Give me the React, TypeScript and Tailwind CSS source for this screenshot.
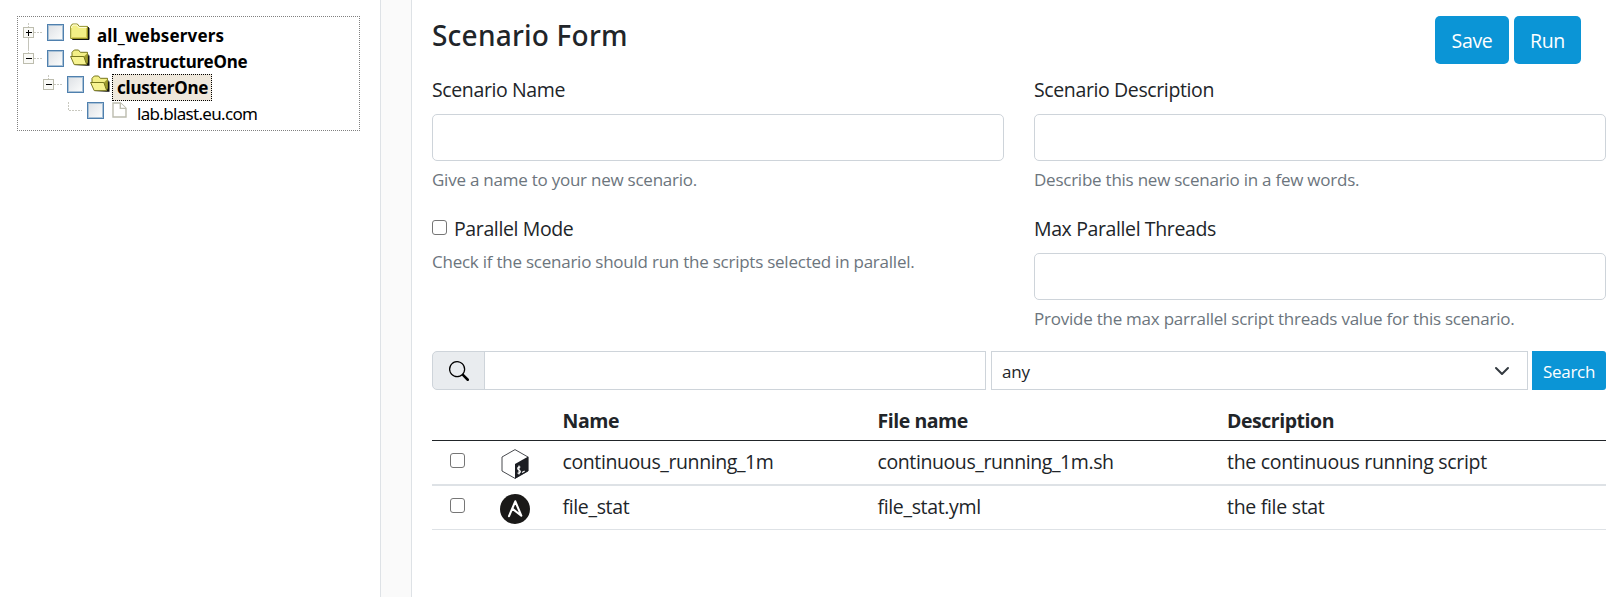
import type { ReactNode } from "react";

const label = "block pt-px text-[19.5px] leading-[30px] tracking-[-0.38px] text-[#212529]";
const help = "mt-[5px] pt-px text-[17px] leading-[26px] tracking-[-0.24px] text-[#6c757d] whitespace-nowrap";
const field = "mt-[9px] block h-[47px] w-full rounded-[5px] border border-[#ced4da] bg-white outline-none";
const button =
  "h-12 rounded-[5px] bg-[#0b95d6] pt-px text-[19.5px] leading-[48px] tracking-[-0.3px] text-white text-center";

function Toggle({ open, above, below }: { open: boolean; above?: boolean; below?: boolean }) {
  return (
    <svg width="24" height="26" viewBox="0 0 24 26" shapeRendering="crispEdges" className="shrink-0">
      {above && <path d="M6.5 0v4" stroke="#c9c9c0" strokeDasharray="2 1" />}
      <path d="M12 9.5h8" stroke="#c9c9c0" strokeDasharray="2 1" />
      {below && <path d="M6.5 15v11" stroke="#c4c4ba" />}
      <rect x="1.5" y="4.5" width="10" height="10" fill="#fafaf7" stroke="#bdbdae" />
      <path d="M4 9.5h6" stroke="#000" strokeWidth="1" />
      {!open && <path d="M6.5 7v6" stroke="#000" strokeWidth="1" />}
    </svg>
  );
}

function TreeCheck() {
  return (
    <span className="mt-px flex h-[17px] w-[17px] shrink-0 border border-[#4f80ae] bg-[#a9c1d6] p-px">
      <span className="flex-1 bg-linear-to-br from-[#dfe2e6] to-[#fafbfb]" />
    </span>
  );
}

function Folder() {
  return (
    <svg width="20" height="20" viewBox="0 0 20 20" className="shrink-0">
      <path d="M2.5 16.5H19V5l-1.5-1V16z" fill="#111" stroke="#111" strokeWidth="1" />
      <path d="M.7 15.5V3.2L2.4 1h5l1.8 2.4H17.500v12.100z" fill="#f3ef86" stroke="#8b8a22" strokeWidth="1" />
      <path d="M1.700 5V3.600L3 2h4l1.700 2.400h7.800" fill="none" stroke="#fffde0" />
      <path d="M16.500 5v9.700H2" fill="none" stroke="#d6c650" />
    </svg>
  );
}

function FolderOpen() {
  return (
    <svg width="20" height="20" viewBox="0 0 20 20" className="shrink-0">
      <path d="M4 16.700h15.500V7l-1-2-2 11z" fill="#111" />
      <path d="M2 8V3.300L4.300 1h4.200l1.800 2.300h7.200V13l-1 2.500L14 8z" fill="#f3ef86" stroke="#77761c" strokeWidth="1" />
      <path d="M14 7.500L17.500 4v9l-1.200 2z" fill="#a09c2e" />
      <path d="M4.200 15.600L.6 7.500h13.200l2.900 8.100z" fill="#f7f391" stroke="#77761c" strokeWidth="1" />
    </svg>
  );
}

function Leaf() {
  return (
    <svg width="20" height="20" viewBox="0 0 20 20" fill="#fff" stroke="#bcbcae" strokeWidth="1.4" className="shrink-0">
      <path d="M3 2h7.500L16 7.200V16H3z" />
      <path d="M10.300 2v5.400H16" />
    </svg>
  );
}

function Row({ indent, children }: { indent: string; children: ReactNode }) {
  return <div className={`flex h-[26px] items-start ${indent}`}>{children}</div>;
}

const nodeText = "ml-[4px] h-[26px] pl-[3px] text-[17px] leading-[25px] text-black whitespace-nowrap";

function Tree() {
  return (
    <div className="mt-4 ml-[17px] h-[115px] w-[343px] border border-dotted border-[#808080] pt-[6px] pl-[4px] font-['Noto_Sans',sans-serif]">
      <Row indent="pl-0">
        <Toggle open={false} above below />
        <span className="w-px" />
        <TreeCheck />
        <span className="w-[6px]" />
        <Folder />
        <span className={`${nodeText} font-bold tracking-[0.15px]`}>all_webservers</span>
      </Row>
      <Row indent="pl-0">
        <Toggle open above />
        <span className="w-px" />
        <TreeCheck />
        <span className="w-[6px]" />
        <FolderOpen />
        <span className={`${nodeText} font-bold tracking-[-0.2px]`}>infrastructureOne</span>
      </Row>
      <Row indent="pl-[20px]">
        <Toggle open above />
        <span className="w-px" />
        <TreeCheck />
        <span className="w-[6px]" />
        <FolderOpen />
        <span className="-mt-px ml-[2px] h-[27px] w-[100px] border border-dotted border-black bg-[#efe8dc] pl-[4px] text-[17px] leading-[25px] font-bold tracking-[-0.2px] text-black">
          clusterOne
        </span>
      </Row>
      <Row indent="pl-[40px]">
        <svg width="24" height="26" viewBox="0 0 24 26" fill="none" stroke="#c9c9c0" strokeDasharray="2 1" shapeRendering="crispEdges">
          <path d="M6.500 1v8.500H20" />
        </svg>
        <span className="w-px" />
        <TreeCheck />
        <span className="w-[6px]" />
        <Leaf />
        <span className={`${nodeText} tracking-[-0.68px]`}>lab.blast.eu.com</span>
      </Row>
    </div>
  );
}

function Check() {
  return <span className="block h-[15px] w-[15px] shrink-0 rounded-[3px] border border-[#767676] bg-white" />;
}

function BashIcon() {
  return (
    <svg width="30" height="30" viewBox="0 0 30 30" className="block">
      <path d="M15 .6L28 8v14L15 29.400 2 22V8z" fill="#fff" stroke="#33363b" strokeWidth=".9" strokeLinejoin="round" />
      <path d="M15 15L28.300 7.600V22L15 29.800z" fill="#1b1d22" />
      <path d="M20.300 18.300c-1-.9-2.600-.2-2.600 1.100 0 1.900 2.700 1.200 2.700 3.200 0 1.500-1.900 2.100-3 1.300M19 16.400v9" fill="none" stroke="#fff" strokeWidth="1.100" />
      <path d="M22 23.600l2.700-1.500" stroke="#fff" strokeWidth="1.100" />
    </svg>
  );
}

function AnsibleIcon() {
  return (
    <svg width="30" height="30" viewBox="0 0 30 30" className="block">
      <circle cx="15" cy="15" r="15" fill="#1a1918" />
      <path d="M9 22.200L15.300 7.300l6 14.400L12.300 14.600" fill="none" stroke="#fff" strokeWidth="2.100" strokeLinejoin="round" strokeLinecap="round" />
    </svg>
  );
}

const cols = "grid grid-cols-[68px_62.5px_315px_349.5px_1fr]";

export default function App() {
  return (
    <div className="flex h-[597px] w-full overflow-hidden bg-[#fafafa] font-['Open_Sans',sans-serif] text-[#212529]">
      <aside className="w-[381px] shrink-0 border-r border-[#dee2e6] bg-white">
        <Tree />
      </aside>
      <main className="ml-[30px] min-w-0 flex-1 border-l border-[#dee2e6] bg-white pt-4 pr-[15px] pl-[20px]">
        <div className="flex h-12 items-start">
          <h2 className="flex-1 font-['Noto_Sans',sans-serif] text-[28px] leading-[38px] font-medium tracking-[0.22px]">Scenario Form</h2>
          <div className="flex gap-[5px] pr-[25px]">
            <button className={`${button} w-[74px]`}>Save</button>
            <button className={`${button} w-[67px]`}>Run</button>
          </div>
        </div>

        <div className="mt-[10px] grid grid-cols-2 gap-x-[30px] gap-y-[20px]">
          <div>
            <label className={label}>Scenario Name</label>
            <input className={field} />
            <p className={help}>Give a name to your new scenario.</p>
          </div>
          <div>
            <label className={label}>Scenario Description</label>
            <input className={field} />
            <p className={help}>Describe this new scenario in a few words.</p>
          </div>
          <div>
            <div className="flex h-[30px] items-start">
              <div className="pt-[7px] pr-[7px]">
                <Check />
              </div>
              <label className={label}>Parallel Mode</label>
            </div>
            <p className={help}>Check if the scenario should run the scripts selected in parallel.</p>
          </div>
          <div>
            <label className={label}>Max Parallel Threads</label>
            <input className={field} />
            <p className={help}>Provide the max parrallel script threads value for this scenario.</p>
          </div>
        </div>

        <div className="mt-[19px] flex h-[39px]">
          <span className="flex w-[53px] items-center justify-center rounded-l-[5px] border border-[#ced4da] bg-[#e9ecef]">
            <svg width="20" height="20" viewBox="0 0 16 16" fill="#000">
              <path d="M11.742 10.344a6.500 6.500 0 1 0-1.397 1.398h-.001c.03.04.062.078.098.115l3.850 3.850a1 1 0 0 0 1.415-1.414l-3.850-3.850a1.007 1.007 0 0 0-.115-.1zM12 6.500a5.500 5.500 0 1 1-11 0 5.500 5.500 0 0 1 11 0z" />
            </svg>
          </span>
          <input className="-ml-px min-w-0 w-[502px] border border-[#ced4da] bg-white outline-none" />
          <div className="ml-[5px] flex flex-1 items-center justify-between border border-[#ced4da] pr-[17px] pl-[10px]">
            <span className="pt-[2px] text-[17px] leading-[26px] tracking-[-0.24px]">any</span>
            <svg width="16" height="16" viewBox="0 0 16 16" fill="none" stroke="#343a40" strokeWidth="2" strokeLinecap="round" strokeLinejoin="round">
              <path d="M2 5l6 6 6-6" />
            </svg>
          </div>
          <button className="ml-[4px] w-[74px] rounded-r-[3px] bg-[#0b95d6] pt-[2px] text-[17px] tracking-[-0.3px] text-white">Search</button>
        </div>

        <div className="text-[19.5px] leading-[30px] whitespace-nowrap">
          <div className={`${cols} h-[51px] border-b border-[#212529] pt-[16px] font-bold tracking-[-0.46px]`}>
            <span />
            <span />
            <span>Name</span>
            <span>File name</span>
            <span>Description</span>
          </div>
          <div className={`${cols} h-[45px] border-b-2 border-[#dee2e6] pt-[6px]`}>
            <span className="pt-[6px] pl-[18px]"><Check /></span>
            <span className="pt-[2px]"><BashIcon /></span>
            <span className="tracking-[-0.4px]">continuous_running_1m</span>
            <span className="tracking-[-0.4px]">continuous_running_1m.sh</span>
            <span className="tracking-[-0.3px]">the continuous running script</span>
          </div>
          <div className={`${cols} h-[44px] border-b border-[#dee2e6] pt-[6px]`}>
            <span className="pt-[6px] pl-[18px]"><Check /></span>
            <span className="pt-[2px]"><AnsibleIcon /></span>
            <span className="tracking-[-0.35px]">file_stat</span>
            <span className="tracking-[-0.35px]">file_stat.yml</span>
            <span className="tracking-[-0.3px]">the file stat</span>
          </div>
        </div>
      </main>
    </div>
  );
}
